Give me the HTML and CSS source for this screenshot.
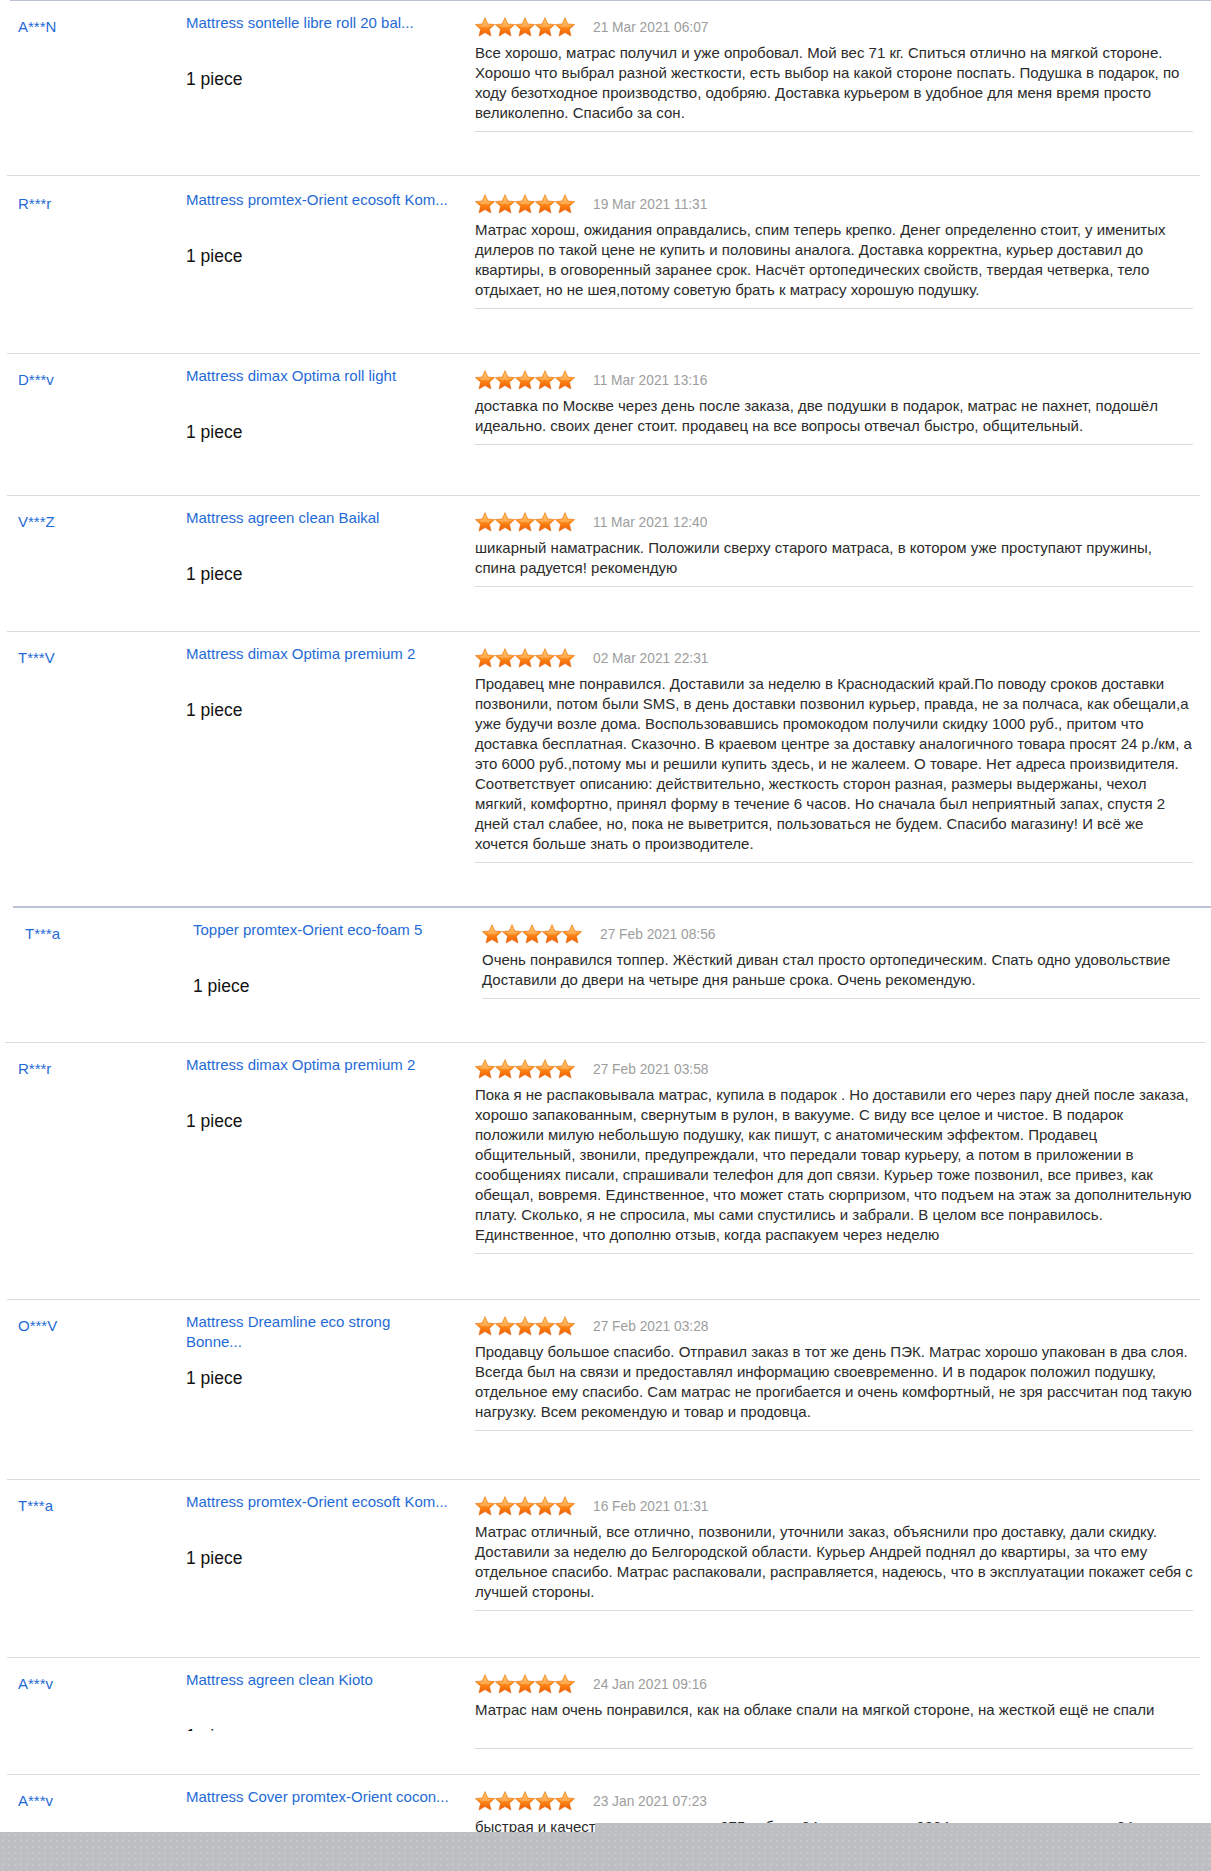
FILE: index.html
```html
<!DOCTYPE html>
<html lang="ru">
<head>
<meta charset="utf-8">
<title>Feedback</title>
<link rel="stylesheet" href="styles.css">
</head>
<body>
<svg class="defs" width="0" height="0" aria-hidden="true">
  <defs>
    <linearGradient id="starfill" x1="0" y1="0" x2="0" y2="1">
      <stop offset="0" stop-color="#ffbf40"/>
      <stop offset="0.45" stop-color="#ff8f1a"/>
      <stop offset="1" stop-color="#ee5a00"/>
    </linearGradient>
    <symbol id="star" viewBox="0 0 20 20">
      <polygon points="10,0.6 12.8,6.9 19.7,7.6 14.5,12.2 16,19.1 10,15.6 4,19.1 5.5,12.2 0.3,7.6 7.2,6.9" fill="url(#starfill)" stroke="#e0660a" stroke-width="0.5" stroke-linejoin="round"/>
      <polygon points="10,2.4 12.1,7.5 17.2,8.1 12.7,10.5 10,9.8 7.3,10.5 2.8,8.1 7.9,7.5" fill="#fff" opacity="0.25"/>
    </symbol>
  </defs>
</svg>

<main class="list">
  <div class="sep sep-top"></div>

  <section class="row pb43">
    <div class="user">A***N</div>
    <div class="product"><a class="plink" href="#">Mattress sontelle libre roll 20 bal...</a><div class="qty">1 piece</div></div>
    <div class="review">
      <div class="meta"><svg class="stars" viewBox="0 0 100 20"><use href="#star" x="0" width="20" height="20"/><use href="#star" x="20" width="20" height="20"/><use href="#star" x="40" width="20" height="20"/><use href="#star" x="60" width="20" height="20"/><use href="#star" x="80" width="20" height="20"/></svg><span class="date">21 Mar 2021 06:07</span></div>
      <p class="text">Все хорошо, матрас получил и уже опробовал. Мой вес 71 кг. Спиться отлично на мягкой стороне. Хорошо что выбрал разной жесткости, есть выбор на какой стороне поспать. Подушка в подарок, по ходу безотходное производство, одобряю. Доставка курьером в удобное для меня время просто великолепно. Спасибо за сон.</p>
      <div class="subline"></div>
    </div>
  </section>
  <div class="sep"></div>

  <section class="row low pb44">
    <div class="user">R***r</div>
    <div class="product"><a class="plink" href="#">Mattress promtex-Orient ecosoft Kom...</a><div class="qty">1 piece</div></div>
    <div class="review">
      <div class="meta"><svg class="stars" viewBox="0 0 100 20"><use href="#star" x="0" width="20" height="20"/><use href="#star" x="20" width="20" height="20"/><use href="#star" x="40" width="20" height="20"/><use href="#star" x="60" width="20" height="20"/><use href="#star" x="80" width="20" height="20"/></svg><span class="date">19 Mar 2021 11:31</span></div>
      <p class="text">Матрас хорош, ожидания оправдались, спим теперь крепко. Денег определенно стоит, у именитых дилеров по такой цене не купить и половины аналога. Доставка корректна, курьер доставил до квартиры, в оговоренный заранее срок. Насчёт ортопедических свойств, твердая четверка, тело отдыхает, но не шея,потому советую брать к матрасу хорошую подушку.</p>
      <div class="subline"></div>
    </div>
  </section>
  <div class="sep"></div>

  <section class="row pb50">
    <div class="user">D***v</div>
    <div class="product"><a class="plink" href="#">Mattress dimax Optima roll light</a><div class="qty">1 piece</div></div>
    <div class="review">
      <div class="meta"><svg class="stars" viewBox="0 0 100 20"><use href="#star" x="0" width="20" height="20"/><use href="#star" x="20" width="20" height="20"/><use href="#star" x="40" width="20" height="20"/><use href="#star" x="60" width="20" height="20"/><use href="#star" x="80" width="20" height="20"/></svg><span class="date">11 Mar 2021 13:16</span></div>
      <p class="text">доставка по Москве через день после заказа, две подушки в подарок, матрас не пахнет, подошёл идеально. своих денег стоит. продавец на все вопросы отвечал быстро, общительный.</p>
      <div class="subline"></div>
    </div>
  </section>
  <div class="sep"></div>

  <section class="row pb44">
    <div class="user">V***Z</div>
    <div class="product"><a class="plink" href="#">Mattress agreen clean Baikal</a><div class="qty">1 piece</div></div>
    <div class="review">
      <div class="meta"><svg class="stars" viewBox="0 0 100 20"><use href="#star" x="0" width="20" height="20"/><use href="#star" x="20" width="20" height="20"/><use href="#star" x="40" width="20" height="20"/><use href="#star" x="60" width="20" height="20"/><use href="#star" x="80" width="20" height="20"/></svg><span class="date">11 Mar 2021 12:40</span></div>
      <p class="text">шикарный наматрасник. Положили сверху старого матраса, в котором уже проступают пружины, спина радуется! рекомендую</p>
      <div class="subline"></div>
    </div>
  </section>
  <div class="sep"></div>

  <section class="row pb43">
    <div class="user">T***V</div>
    <div class="product"><a class="plink" href="#">Mattress dimax Optima premium 2</a><div class="qty">1 piece</div></div>
    <div class="review">
      <div class="meta"><svg class="stars" viewBox="0 0 100 20"><use href="#star" x="0" width="20" height="20"/><use href="#star" x="20" width="20" height="20"/><use href="#star" x="40" width="20" height="20"/><use href="#star" x="60" width="20" height="20"/><use href="#star" x="80" width="20" height="20"/></svg><span class="date">02 Mar 2021 22:31</span></div>
      <p class="text">Продавец мне понравился. Доставили за неделю в Краснодаский край.По поводу сроков доставки позвонили, потом были SMS, в день доставки позвонил курьер, правда, не за полчаса, как обещали,а уже будучи возле дома. Воспользовавшись промокодом получили скидку 1000 руб., притом что доставка бесплатная. Сказочно. В краевом центре за доставку аналогичного товара просят 24 р./км, а это 6000 руб.,потому мы и решили купить здесь, и не жалеем. О товаре. Нет адреса произвидителя. Соответствует описанию: действительно, жесткость сторон разная, размеры выдержаны, чехол мягкий, комфортно, принял форму в течение 6 часов. Но сначала был неприятный запах, спустя 2 дней стал слабее, но, пока не выветрится, пользоваться не будем. Спасибо магазину! И всё же хочется больше знать о производителе.</p>
      <div class="subline"></div>
    </div>
  </section>
  <div class="sep sep-sect"></div>

  <section class="row shift pb43">
    <div class="user">T***a</div>
    <div class="product"><a class="plink" href="#">Topper promtex-Orient eco-foam 5</a><div class="qty">1 piece</div></div>
    <div class="review">
      <div class="meta"><svg class="stars" viewBox="0 0 100 20"><use href="#star" x="0" width="20" height="20"/><use href="#star" x="20" width="20" height="20"/><use href="#star" x="40" width="20" height="20"/><use href="#star" x="60" width="20" height="20"/><use href="#star" x="80" width="20" height="20"/></svg><span class="date">27 Feb 2021 08:56</span></div>
      <p class="text">Очень понравился топпер. Жёсткий диван стал просто ортопедическим. Спать одно удовольствие Доставили до двери на четыре дня раньше срока. Очень рекомендую.</p>
      <div class="subline"></div>
    </div>
  </section>
  <div class="sep sep-wide"></div>

  <section class="row pb45">
    <div class="user">R***r</div>
    <div class="product"><a class="plink" href="#">Mattress dimax Optima premium 2</a><div class="qty">1 piece</div></div>
    <div class="review">
      <div class="meta"><svg class="stars" viewBox="0 0 100 20"><use href="#star" x="0" width="20" height="20"/><use href="#star" x="20" width="20" height="20"/><use href="#star" x="40" width="20" height="20"/><use href="#star" x="60" width="20" height="20"/><use href="#star" x="80" width="20" height="20"/></svg><span class="date">27 Feb 2021 03:58</span></div>
      <p class="text">Пока я не распаковывала матрас, купила в подарок . Но доставили его через пару дней после заказа, хорошо запакованным, свернутым в рулон, в вакууме. С виду все целое и чистое. В подарок положили милую небольшую подушку, как пишут, с анатомическим эффектом. Продавец общительный, звонили, предупреждали, что передали товар курьеру, а потом в приложении в сообщениях писали, спрашивали телефон для доп связи. Курьер тоже позвонил, все привез, как обещал, вовремя. Единственное, что может стать сюрпризом, что подъем на этаж за дополнительную плату. Сколько, я не спросила, мы сами спустились и забрали. В целом все понравилось. Единственное, что дополню отзыв, когда распакуем через неделю</p>
      <div class="subline"></div>
    </div>
  </section>
  <div class="sep"></div>

  <section class="row pb48">
    <div class="user">O***V</div>
    <div class="product"><a class="plink" href="#">Mattress Dreamline eco strong<br>Bonne...</a><div class="qty">1 piece</div></div>
    <div class="review">
      <div class="meta"><svg class="stars" viewBox="0 0 100 20"><use href="#star" x="0" width="20" height="20"/><use href="#star" x="20" width="20" height="20"/><use href="#star" x="40" width="20" height="20"/><use href="#star" x="60" width="20" height="20"/><use href="#star" x="80" width="20" height="20"/></svg><span class="date">27 Feb 2021 03:28</span></div>
      <p class="text">Продавцу большое спасибо. Отправил заказ в тот же день ПЭК. Матрас хорошо упакован в два слоя. Всегда был на связи и предоставлял информацию своевременно. И в подарок положил подушку, отдельное ему спасибо. Сам матрас не прогибается и очень комфортный, не зря рассчитан под такую нагрузку. Всем рекомендую и товар и продовца.</p>
      <div class="subline"></div>
    </div>
  </section>
  <div class="sep"></div>

  <section class="row pb46">
    <div class="user">T***a</div>
    <div class="product"><a class="plink" href="#">Mattress promtex-Orient ecosoft Kom...</a><div class="qty">1 piece</div></div>
    <div class="review">
      <div class="meta"><svg class="stars" viewBox="0 0 100 20"><use href="#star" x="0" width="20" height="20"/><use href="#star" x="20" width="20" height="20"/><use href="#star" x="40" width="20" height="20"/><use href="#star" x="60" width="20" height="20"/><use href="#star" x="80" width="20" height="20"/></svg><span class="date">16 Feb 2021 01:31</span></div>
      <p class="text">Матрас отличный, все отлично, позвонили, уточнили заказ, объяснили про доставку, дали скидку. Доставили за неделю до Белгородской области. Курьер Андрей поднял до квартиры, за что ему отдельное спасибо. Матрас распаковали, расправляется, надеюсь, что в эксплуатации покажет себя с лучшей стороны.</p>
      <div class="subline"></div>
    </div>
  </section>
  <div class="sep"></div>

  <section class="row pb25">
    <div class="user">A***v</div>
    <div class="product"><a class="plink" href="#">Mattress agreen clean Kioto</a><div class="qty cut">1 piece</div></div>
    <div class="review">
      <div class="meta"><svg class="stars" viewBox="0 0 100 20"><use href="#star" x="0" width="20" height="20"/><use href="#star" x="20" width="20" height="20"/><use href="#star" x="40" width="20" height="20"/><use href="#star" x="60" width="20" height="20"/><use href="#star" x="80" width="20" height="20"/></svg><span class="date">24 Jan 2021 09:16</span></div>
      <p class="text two">Матрас нам очень понравился, как на облаке спали на мягкой стороне, на жесткой ещё не спали</p>
      <div class="subline"></div>
    </div>
  </section>
  <div class="sep"></div>

  <section class="row pb45">
    <div class="user">A***v</div>
    <div class="product"><a class="plink" href="#">Mattress Cover promtex-Orient cocon...</a><div class="qty">1 piece</div></div>
    <div class="review">
      <div class="meta"><svg class="stars" viewBox="0 0 100 20"><use href="#star" x="0" width="20" height="20"/><use href="#star" x="20" width="20" height="20"/><use href="#star" x="40" width="20" height="20"/><use href="#star" x="60" width="20" height="20"/><use href="#star" x="80" width="20" height="20"/></svg><span class="date">23 Jan 2021 07:23</span></div>
      <p class="text">быстрая и качественная доставка, 275 руб. за 24 часа, матрас 2024 года, ответы в течение 24 часов 00:24 24.01.21</p>
      <div class="subline"></div>
    </div>
  </section>
</main>

<div class="veil"><div class="veil-tab"></div></div>
</body>
</html>
```

FILE: styles.css
```css
* { box-sizing: border-box; }

html, body { margin: 0; padding: 0; }

body {
  position: relative;
  height: 1871px;
  overflow: hidden;
  background: #ffffff;
  font-family: "Liberation Sans", Arial, sans-serif;
  color: #333333;
}

.defs { position: absolute; width: 0; height: 0; overflow: hidden; }

.sep { height: 1px; background: #dcdcdc; margin-left: 7px; width: 1193px; }
.sep-top { background: #b9c1d3; margin-left: 10px; width: 1201px; }
.sep-sect { height: 2px; background: #b9c1d3; margin-left: 13px; width: 1198px; }
.sep-wide { margin-left: 5px; width: 1200px; }

.row {
  display: grid;
  grid-template-columns: 168px 289px 718px;
  padding: 12px 0 45px 18px;
}
.row.shift { padding-left: 25px; }
.row.low { padding-top: 14px; }
.pb25 { padding-bottom: 25px; }
.pb43 { padding-bottom: 43px; }
.pb44 { padding-bottom: 44px; }
.pb45 { padding-bottom: 45px; }
.pb46 { padding-bottom: 46px; }
.pb48 { padding-bottom: 48px; }
.pb50 { padding-bottom: 50px; }

.user {
  padding-top: 4px;
  font-size: 15px;
  line-height: 20px;
  color: #1f6bd6;
}

.plink {
  display: block;
  height: 40px;
  font-size: 15px;
  line-height: 20px;
  color: #1f6bd6;
  text-decoration: none;
  white-space: nowrap;
}

.qty {
  margin-top: 16px;
  font-size: 17.5px;
  line-height: 20px;
  color: #111111;
}
.qty.cut { height: 5px; overflow: hidden; }

.review { padding-top: 4px; }

.meta { display: flex; height: 20px; }

.stars { display: block; width: 100px; height: 20px; flex: none; }

.date {
  margin-left: 18px;
  margin-top: 1px;
  font-size: 13.75px;
  line-height: 20px;
  color: #9d9d9d;
}

.text {
  margin: 6px 0 0;
  font-size: 15px;
  line-height: 20px;
  color: #2b2b2b;
}
.text.two { min-height: 40px; }

.subline { margin-top: 8px; height: 1px; background: #dcdcdc; }

.veil {
  position: absolute;
  left: 0;
  top: 1832px;
  width: 100%;
  height: 39px;
  background-color: #bdbec2;
  background-image: radial-gradient(circle, #c7c8cb 0.8px, transparent 1px);
  background-size: 6px 6px;
}
.veil-tab {
  position: absolute;
  left: 595px;
  right: 0;
  top: -9px;
  height: 9px;
  background-color: #bdbec2;
  background-image: radial-gradient(circle, #c7c8cb 0.8px, transparent 1px);
  background-size: 6px 6px;
}
```
